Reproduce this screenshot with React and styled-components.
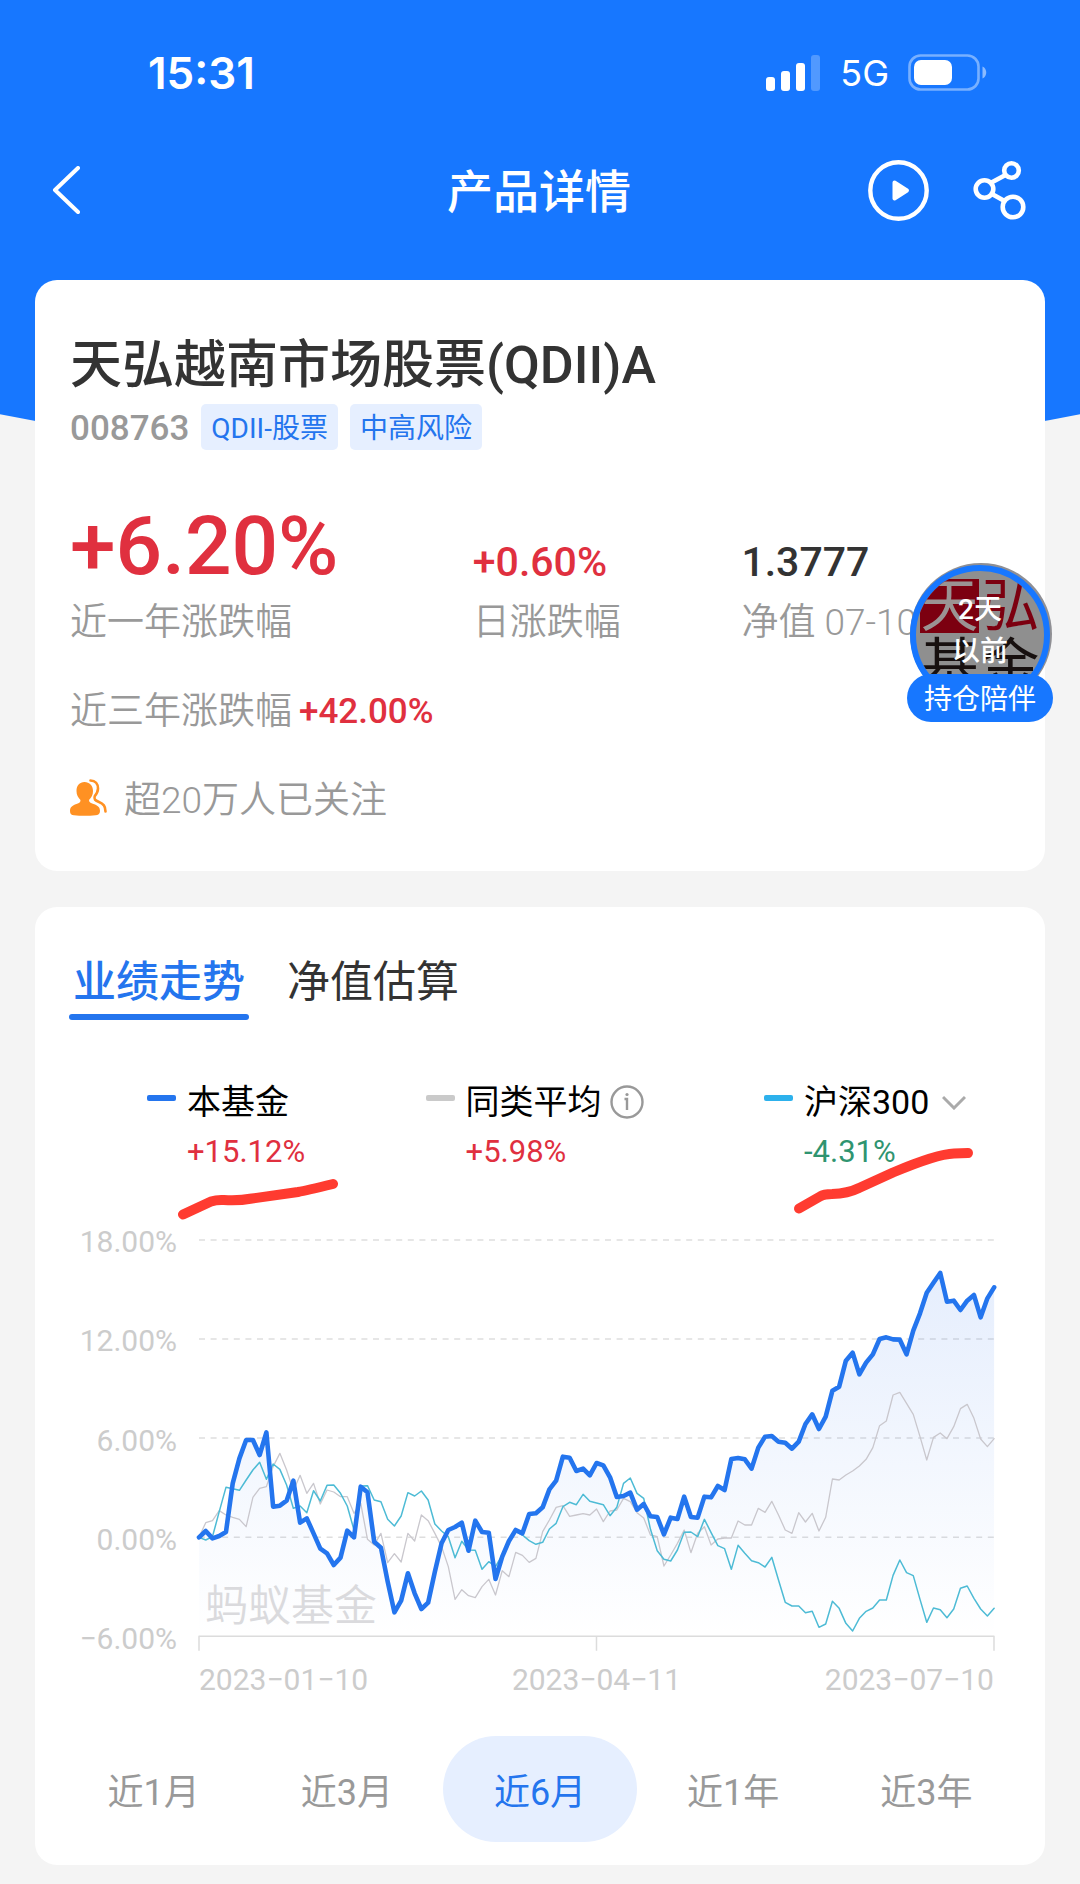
import React, { useState } from "react";
import styled, { createGlobalStyle, css } from "styled-components";

const color = {
  brand: "#1777ff",
  link: "#2475ee",
  rise: "#e0303f",
  fall: "#2f9470",
  ink: "#333333",
  muted: "#999999",
  axis: "#cccccc",
  tint: "#e6efff",
};

const GlobalStyle = createGlobalStyle`
  *, *::before, *::after { box-sizing: border-box; }
  body {
    margin: 0;
    background: #f4f4f4;
    color: ${color.ink};
    font-family: Roboto, "Noto Sans CJK SC", sans-serif;
  }
  button, select { font: inherit; color: inherit; border: 0; padding: 0; background: none; cursor: pointer; }
  h1, h2, p, ul { margin: 0; padding: 0; font-weight: inherit; }
  svg { display: block; flex: none; }
`;

const Page = styled.div`
  position: relative;
  isolation: isolate;
  padding-bottom: 19px;

  &::before {
    content: "";
    position: absolute;
    z-index: -1;
    inset: 0 0 auto;
    height: 465px;
    background: ${color.brand};
    clip-path: ellipse(110% 100% at 50% 0);
  }
`;

const StatusBar = styled.div`
  display: flex;
  align-items: center;
  justify-content: space-between;
  height: 146px;
  padding: 0 92px 0 148px;
  color: #fff;
  font-family: Inter, sans-serif;
`;

const Clock = styled.time`
  font-size: 44px;
  font-weight: 600;
`;

const Indicators = styled.div`
  display: flex;
  align-items: center;
  gap: 19px;
  font-size: 36px;
  font-weight: 400;
`;

const NavBar = styled.header`
  display: grid;
  grid-template-columns: 1fr auto 1fr;
  align-items: center;
  height: 88px;
  padding: 0 54px 0 52px;
  margin-bottom: 46px;
  color: #fff;
`;

const NavTitle = styled.h1`
  padding-bottom: 4px;
  font-size: 46px;
  font-weight: 500;
`;

const NavActions = styled.div`
  display: flex;
  align-items: center;
  justify-content: flex-end;
  gap: 44px;
`;

const Main = styled.main`
  display: flex;
  flex-direction: column;
  gap: 36px;
  padding: 0 35px;
`;

const Card = styled.section`
  position: relative;
  background: #fff;
  border-radius: 22px;
`;

const FundCard = styled(Card)`
  padding: 50px 35px 44px;
`;

const FundName = styled.h2`
  font-size: 52px;
  line-height: 72px;
  font-weight: 500;
`;

const FundMeta = styled.div`
  display: flex;
  align-items: center;
  gap: 12px;
  margin-top: 2px;
`;

const FundCode = styled.span`
  padding-top: 3px;
  font-size: 35px;
  line-height: 43px;
  font-weight: 500;
  color: ${color.muted};
`;

const Tag = styled.span`
  padding: 3px 10px 0;
  border-radius: 5px;
  background: ${color.tint};
  color: ${color.link};
  font-size: 28px;
  line-height: 43px;
`;

const Stats = styled.div`
  display: grid;
  grid-template-columns: 3fr 2fr 2fr;
  align-items: end;
  margin-top: 52px;
`;

const StatValue = styled.p`
  font-weight: 500;
  font-size: ${(p) => (p.$large ? 82 : 41)}px;
  line-height: ${(p) => (p.$large ? 88 : 56)}px;
  color: ${(p) => (p.$rise ? color.rise : color.ink)};
`;

const StatLabel = styled.p`
  margin-top: 7px;
  font-size: 37px;
  line-height: 52px;
  font-weight: 350;
  color: ${color.muted};
  white-space: nowrap;
`;

const InfoLine = styled.p`
  display: flex;
  align-items: center;
  gap: ${(p) => p.$gap}px;
  margin-top: 37px;
  font-size: 37px;
  line-height: 52px;
  font-weight: 350;
  color: ${color.muted};

  svg { margin-bottom: 8px; }
`;

const InlineRise = styled.strong`
  font-size: 35px;
  font-weight: 500;
  color: ${color.rise};
`;

const Companion = styled.button`
  position: absolute;
  top: 285px;
  right: -8px;
  width: 146px;
  display: flex;
  flex-direction: column;
  align-items: center;
`;

const Avatar = styled.span`
  position: relative;
  width: 140px;
  height: 140px;
  overflow: hidden;
  border: 6px solid ${color.brand};
  border-radius: 50%;
  box-shadow: 1px -1px 0 1px #8f8f94;
  background: #8f8f8f;
`;

const AvatarLogo = styled.span`
  display: grid;
  grid-template-columns: 59px 59px;
  justify-content: center;
  column-gap: 2px;
  padding-top: 8px;
  font-size: 58px;
  line-height: 54px;
  text-align: center;
  color: #17100f;
`;

const LogoGlyph = styled.span`
  height: 54px;
  margin-bottom: 6px;
  ${(p) => p.$filled && css`background: #7c0010; color: #9b9393;`}
  ${(p) => p.$red && css`color: #7c0010;`}
`;

const AvatarCaption = styled.span`
  position: absolute;
  inset: 18px 0 auto;
  font-size: 28px;
  line-height: 42px;
  font-weight: 500;
  text-align: center;
  color: #fff;
`;

const CompanionLabel = styled.span`
  position: relative;
  width: 100%;
  margin-top: -31px;
  padding-top: 4px;
  border-radius: 24px;
  background: ${color.brand};
  color: #fff;
  font-size: 28px;
  line-height: 44px;
`;

const TrendCard = styled(Card)`
  padding: 46px 0 23px;
`;

const Tabs = styled.div`
  display: flex;
  gap: 34px;
  padding: 0 34px;
`;

const Tab = styled.button`
  display: flex;
  flex-direction: column;
  gap: 3px;
  font-size: 43px;
  line-height: 58px;
  font-weight: ${(p) => (p.$active ? 500 : 400)};
  color: ${(p) => (p.$active ? color.link : color.ink)};

  span { padding: 0 4px; }

  &::after {
    content: "";
    width: 100%;
    height: 6px;
    border-radius: 3px;
    background: ${(p) => (p.$active ? color.link : "transparent")};
  }
`;

const Legend = styled.ul`
  display: flex;
  justify-content: space-between;
  margin-top: 58px;
  padding: 0 79px 0 112px;
  list-style: none;
`;

const LegendItem = styled.li`
  position: relative;
  display: grid;
  grid-template-columns: 29px auto;
  column-gap: 11px;
  row-gap: 2px;
  align-items: center;
`;

const Swatch = styled.span`
  height: 6px;
  margin-bottom: 8px;
  border-radius: 2px;
  background: ${(p) => p.$color};
`;

const SeriesName = styled.span`
  display: flex;
  align-items: center;
  gap: ${(p) => p.$gap || 0}px;
  font-size: 34px;
  line-height: 48px;
  color: #000;
`;

const BenchmarkSelect = styled.select`
  appearance: none;
  line-height: 48px;
  color: #000;
`;

const InfoButton = styled.button`
  color: ${color.muted};
`;

const SeriesChange = styled.span`
  grid-column: 2;
  font-size: 31px;
  line-height: 48px;
  color: ${(p) => (p.$fall ? color.fall : color.rise)};
`;

const PenMark = styled.svg`
  position: absolute;
  left: 28px;
  top: ${(p) => p.$top}px;
  fill: none;
  stroke: #ff3b30;
  stroke-width: 10;
  stroke-linecap: round;
  stroke-linejoin: round;
  pointer-events: none;
`;

const Chart = styled.div`
  display: grid;
  grid-template-columns: 107px 1fr;
  column-gap: 22px;
  margin-top: 46px;
  padding: 0 51px 0 35px;
  font-size: 30px;
  line-height: 40px;
  color: ${color.axis};
`;

const ValueAxis = styled.div`
  display: flex;
  flex-direction: column;
  justify-content: space-between;
  height: 437px;
  text-align: right;
`;

const Plot = styled.div`
  position: relative;
  padding-top: 18px;
`;

const PlotDrawing = styled.svg`
  width: 100%;
  height: 411px;
  overflow: visible;

  path, line { vector-effect: non-scaling-stroke; fill: none; stroke-linejoin: round; stroke-linecap: round; }
  .area { fill: url(#fund-area); }
  .grid { stroke: #dedede; stroke-width: 1.5; stroke-dasharray: 6 5.6; stroke-linecap: butt; }
  .axis { stroke: #dcdcdc; stroke-width: 1.5; stroke-linecap: butt; }
`;

const Watermark = styled.span`
  position: absolute;
  left: 6px;
  bottom: 64px;
  font-size: 43px;
  line-height: 60px;
  font-weight: 350;
  color: #dadadd;
`;

const DateAxis = styled.div`
  display: flex;
  justify-content: space-between;
  margin-top: 9px;
`;

const Periods = styled.div`
  display: grid;
  grid-template-columns: repeat(5, 1fr);
  margin-top: 36px;
  padding: 0 22px;
`;

const Period = styled.button`
  height: 106px;
  border-radius: 53px;
  font-size: 36px;
  font-weight: 400;
  color: ${(p) => (p.$active ? color.link : color.muted)};
  background: ${(p) => (p.$active ? color.tint : "none")};
`;

const IconButton = styled.button`
  justify-self: start;
`;

/* Samples are plotted in a 2382 x 1190 field whose top edge (18%) is y = 60. */
const TOP = 60;
const STEP = 20.19;
const WIDTH = 2382;
const BOTTOM = 1249;

const fund = [
  952, 933, 955, 948, 936, 790, 715, 660, 660, 705, 637, 860, 857, 842, 782, 908, 895, 940, 986, 1000, 1035, 1013, 932, 952, 800, 817, 965, 983, 1085,
  1177, 1142, 1060, 1120, 1167, 1148, 1055, 970, 930, 921, 908, 992, 902, 936, 938, 1077, 1010, 963, 930, 940, 882, 880, 862, 808, 782, 710, 713, 753, 746,
  766, 729, 736, 772, 831, 828, 818, 869, 852, 889, 891, 943, 893, 897, 830, 891, 893, 830, 832, 798, 810, 717, 714, 718, 746, 683, 650, 648, 665, 668,
  686, 665, 612, 583, 627, 590, 512, 500, 422, 398, 463, 428, 403, 357, 352, 358, 359, 403, 332, 280, 218, 188, 159, 245, 242, 270, 242, 225, 292, 235, 202,
];
const peers = [
  952, 908, 902, 872, 885, 892, 898, 920, 832, 805, 800, 740, 700, 750, 812, 766, 820, 790, 852, 810, 816, 830, 830, 880, 850, 958, 975, 940, 1028,
  1001, 1026, 940, 963, 885, 902, 940, 980, 1040, 1138, 1109, 1127, 1133, 1100, 1078, 1125, 1052, 1070, 997, 1006, 1027, 1015, 935, 900, 862, 857, 889, 885, 881,
  885, 867, 905, 873, 870, 835, 845, 878, 894, 945, 950, 1038, 1005, 970, 930, 998, 940, 920, 975, 957, 954, 954, 903, 915, 915, 865, 877, 844, 885, 930,
  940, 878, 906, 880, 933, 892, 777, 780, 765, 753, 738, 718, 683, 617, 603, 525, 517, 550, 583, 650, 720, 652, 639, 656, 620, 566, 553, 595, 657, 680, 656,
];
const csi300 = [
  952, 960, 950, 875, 802, 806, 811, 780, 750, 727, 778, 732, 748, 795, 865, 858, 878, 812, 843, 796, 795, 820, 858, 930, 798, 797, 840, 845, 898,
  918, 888, 818, 828, 813, 840, 912, 933, 950, 1013, 964, 990, 991, 1048, 1025, 1040, 1005, 965, 935, 945, 962, 973, 967, 927, 910, 860, 847, 854, 823,
  844, 849, 854, 887, 862, 790, 774, 820, 835, 928, 992, 1018, 1023, 990, 937, 936, 950, 898, 938, 977, 986, 1048, 976, 1000, 1022, 1028, 1041, 1012, 1080, 1147,
  1158, 1158, 1178, 1174, 1222, 1212, 1144, 1165, 1210, 1233, 1195, 1174, 1164, 1140, 1140, 1066, 1020, 1058, 1067, 1138, 1207, 1164, 1169, 1193, 1167, 1105, 1098, 1135, 1167, 1188, 1165,
];

const toPath = (points) =>
  points.map((y, i) => `${i ? "L" : "M"}${(i * STEP).toFixed(1)} ${y}`).join("");

const GRID_LINES = [60, 357, 654, 952];
const VALUE_TICKS = ["18.00%", "12.00%", "6.00%", "0.00%", "−6.00%"];
const DATE_TICKS = ["2023−01−10", "2023−04−11", "2023−07−10"];
const PERIODS = ["近1月", "近3月", "近6月", "近1年", "近3年"];
const TABS = ["业绩走势", "净值估算"];

const SignalIcon = () => (
  <svg width="55" height="36" viewBox="0 0 55 36" fill="#fff" aria-hidden="true">
    <rect x="0" y="22" width="9" height="14" rx="3" />
    <rect x="15" y="16" width="9" height="20" rx="3" />
    <rect x="30" y="8" width="9" height="28" rx="3" />
    <rect x="45" y="0" width="9" height="36" rx="3" opacity=".25" />
  </svg>
);

const BatteryIcon = () => (
  <svg width="80" height="38" viewBox="0 0 80 38" aria-hidden="true">
    <rect x="1.5" y="1.5" width="69" height="34" rx="11" fill="none" stroke="#fff" strokeOpacity=".42" strokeWidth="2.6" />
    <rect x="6" y="6" width="38" height="25" rx="7" fill="#fff" />
    <path d="M74.500 12.500c5 2 5 10 0 12z" fill="#fff" fillOpacity=".5" />
  </svg>
);

const BackIcon = () => (
  <svg width="28" height="48" viewBox="0 0 28 48" fill="none" stroke="#fff" strokeWidth="4" strokeLinecap="round" strokeLinejoin="round" aria-hidden="true">
    <path d="M26 2 3 24l23 22" />
  </svg>
);

const PlayIcon = () => (
  <svg width="61" height="61" viewBox="0 0 61 61" aria-hidden="true">
    <circle cx="30.500" cy="30.500" r="28.200" fill="none" stroke="#fff" strokeWidth="4.400" />
    <path d="M26.500 22.500 39 30.500 26.500 38.500z" fill="#fff" stroke="#fff" strokeWidth="4" strokeLinejoin="round" />
  </svg>
);

const ShareIcon = () => (
  <svg width="53" height="60" viewBox="0 0 53 60" fill="none" stroke="#fff" strokeWidth="4.600" aria-hidden="true">
    <circle cx="38.500" cy="10.500" r="7.300" />
    <circle cx="11.500" cy="29" r="8.800" />
    <circle cx="40" cy="47" r="10.300" />
    <path d="m18.500 22.500 14-7.500M19 34l12.500 7" />
  </svg>
);

const FollowersIcon = () => (
  <svg width="37" height="37" viewBox="0 0 37 37" aria-hidden="true">
    <path
      d="M14.500 3c5 0 8.500 3.500 8.500 9 0 4-1.500 6.500-4 9 0 2.500 1.500 3 4.500 4 4.500 1.500 6.500 3.300 6.500 7 0 3-2 4-4.500 4.200-7 .8-15 .8-21.500 0C1.500 36 0 35 0 32c0-3.700 2-5.500 6.500-7 3-1 4-1.500 4-4C8 18.500 6.500 16 6.500 12c0-5.500 3-9 8-9z"
      fill="#ff9123"
    />
    <path
      d="M20.500 1.500c5 0 7.500 3.500 7.500 8 0 3.500-1.500 5.500-3.300 7.800-.8 3 .3 4 3.800 5.500 5 2.200 7 4 7 9.700"
      fill="none"
      stroke="#ff9123"
      strokeWidth="2.600"
      strokeLinecap="round"
    />
  </svg>
);

const InfoIcon = () => (
  <svg width="34" height="34" viewBox="0 0 34 34" fill="none" stroke="currentColor" aria-hidden="true">
    <circle cx="17" cy="17" r="15.500" strokeWidth="2.400" />
    <path d="M14.500 14H17v11" strokeWidth="2.400" />
    <circle cx="17" cy="9.500" r="1.600" fill="currentColor" stroke="none" />
  </svg>
);

const ChevronIcon = () => (
  <svg width="24" height="15" viewBox="0 0 24 15" fill="none" stroke="#aaa" strokeWidth="3" aria-hidden="true">
    <path d="m1 2 11 11L23 2" />
  </svg>
);

function TrendPlot() {
  const line = toPath(fund);
  return (
    <PlotDrawing viewBox={`0 ${TOP} ${WIDTH} 1233`} preserveAspectRatio="none" role="img" aria-label="业绩走势">
      <defs>
        <linearGradient id="fund-area" x1="0" y1="0" x2="0" y2="1">
          <stop offset="0" stopColor="#2a70ee" stopOpacity=".12" />
          <stop offset="1" stopColor="#2a70ee" stopOpacity="0" />
        </linearGradient>
      </defs>
      {GRID_LINES.map((y) => (
        <line key={y} className="grid" x1="0" x2={WIDTH} y1={y} y2={y} />
      ))}
      <path className="area" d={`${line}L${WIDTH} ${BOTTOM}L0 ${BOTTOM}Z`} />
      <path className="axis" d={`M0 ${BOTTOM + 43}V${BOTTOM}H${WIDTH}v43M${WIDTH / 2} ${BOTTOM}v43`} />
      <path d={toPath(peers)} stroke="#c9c7cd" strokeWidth="1.300" />
      <path d={toPath(csi300)} stroke="#4dbbd5" strokeWidth="1.500" />
      <path d={line} stroke={color.link} strokeWidth="4.600" />
    </PlotDrawing>
  );
}

export default function App() {
  const [tab, setTab] = useState(TABS[0]);
  const [period, setPeriod] = useState("近6月");

  return (
    <Page>
      <GlobalStyle />
      <StatusBar>
        <Clock>15:31</Clock>
        <Indicators>
          <SignalIcon />
          <span>5G</span>
          <BatteryIcon />
        </Indicators>
      </StatusBar>

      <NavBar>
        <IconButton aria-label="返回"><BackIcon /></IconButton>
        <NavTitle>产品详情</NavTitle>
        <NavActions>
          <IconButton aria-label="播放"><PlayIcon /></IconButton>
          <IconButton aria-label="分享"><ShareIcon /></IconButton>
        </NavActions>
      </NavBar>

      <Main>
        <FundCard>
          <FundName>天弘越南市场股票(QDII)A</FundName>
          <FundMeta>
            <FundCode>008763</FundCode>
            <Tag>QDII-股票</Tag>
            <Tag>中高风险</Tag>
          </FundMeta>
          <Stats>
            <div>
              <StatValue $large $rise>+6.20%</StatValue>
              <StatLabel>近一年涨跌幅</StatLabel>
            </div>
            <div>
              <StatValue $rise>+0.60%</StatValue>
              <StatLabel>日涨跌幅</StatLabel>
            </div>
            <div>
              <StatValue>1.3777</StatValue>
              <StatLabel>净值 07-10</StatLabel>
            </div>
          </Stats>
          <InfoLine $gap={7}>
            近三年涨跌幅<InlineRise>+42.00%</InlineRise>
          </InfoLine>
          <InfoLine $gap={17}>
            <FollowersIcon />
            超20万人已关注
          </InfoLine>
          <Companion>
            <Avatar>
              <AvatarLogo>
                <LogoGlyph $filled>天</LogoGlyph>
                <LogoGlyph $red>弘</LogoGlyph>
                <LogoGlyph>基</LogoGlyph>
                <LogoGlyph>金</LogoGlyph>
              </AvatarLogo>
              <AvatarCaption>2天<br />以前</AvatarCaption>
            </Avatar>
            <CompanionLabel>持仓陪伴</CompanionLabel>
          </Companion>
        </FundCard>

        <TrendCard>
          <Tabs role="tablist">
            {TABS.map((name) => (
              <Tab key={name} role="tab" aria-selected={tab === name} $active={tab === name} onClick={() => setTab(name)}>
                <span>{name}</span>
              </Tab>
            ))}
          </Tabs>

          <Legend>
            <LegendItem>
              <Swatch $color={color.link} />
              <SeriesName>本基金</SeriesName>
              <SeriesChange>+15.12%</SeriesChange>
              <PenMark $top={97} width="168" height="48" viewBox="175 1175 168 48" aria-hidden="true">
                <path d="M183 1214.500 211 1201.500Q217 1199.500 224 1200 238 1201 252 1198.500L298 1192Q306 1190.500 333 1184" />
              </PenMark>
            </LegendItem>
            <LegendItem>
              <Swatch $color="#cacaca" />
              <SeriesName $gap={8}>
                同类平均
                <InfoButton aria-label="同类平均说明"><InfoIcon /></InfoButton>
              </SeriesName>
              <SeriesChange>+5.98%</SeriesChange>
            </LegendItem>
            <LegendItem>
              <Swatch $color="#2db1ec" />
              <SeriesName $gap={12}>
                <BenchmarkSelect aria-label="对比指数" defaultValue="沪深300">
                  <option>沪深300</option>
                </BenchmarkSelect>
                <ChevronIcon />
              </SeriesName>
              <SeriesChange $fall>-4.31%</SeriesChange>
              <PenMark $top={67} width="184" height="72" viewBox="792 1145 184 72" aria-hidden="true">
                <path d="M799 1208.500 820 1196.500Q824 1194 832 1194 848 1193.500 859 1188L893 1172.500Q937 1154 954 1153.500L968 1153" />
              </PenMark>
            </LegendItem>
          </Legend>

          <Chart>
            <ValueAxis>
              {VALUE_TICKS.map((t) => <span key={t}>{t}</span>)}
            </ValueAxis>
            <Plot>
              <TrendPlot />
              <Watermark>蚂蚁基金</Watermark>
              <DateAxis>
                {DATE_TICKS.map((t) => <span key={t}>{t}</span>)}
              </DateAxis>
            </Plot>
          </Chart>

          <Periods>
            {PERIODS.map((name) => (
              <Period key={name} aria-pressed={period === name} $active={period === name} onClick={() => setPeriod(name)}>
                {name}
              </Period>
            ))}
          </Periods>
        </TrendCard>
      </Main>
    </Page>
  );
}
